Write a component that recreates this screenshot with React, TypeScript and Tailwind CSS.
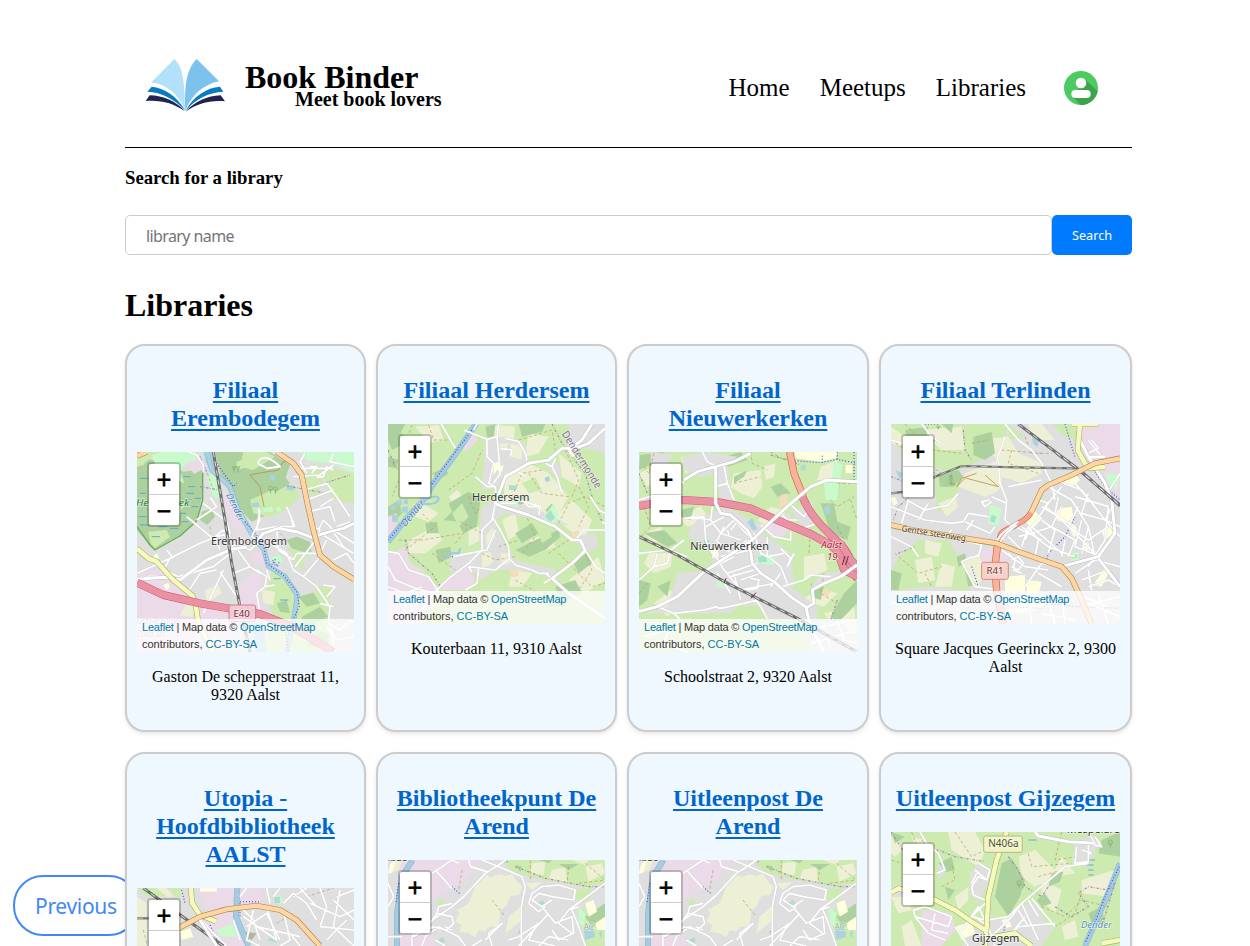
import React from "react";

type Kind = string;
type Layer = [Kind, string];
type Label = { x: number; y: number; t: string; s?: number; c?: string; r?: number; i?: boolean; w?: number };
type Badge = { x: number; y: number; w: number; h: number; fill: string; stroke: string };
type MapData = { layers: Layer[]; labels: Label[]; badges?: Badge[]; base: string };

const FILLS: Record<string, string> = {
  forest: "#add19e",
  grass: "#cdebb0",
  farm: "#eef0d5",
  pink: "#ebdbe8",
  town: "#dfdfdf",
  mint: "#c8facc",
  pitch: "#aae0cb",
  water: "#aad3df",
  school: "#ffffe0",
  sand: "#f5dcba",
  olive: "#b5b59a",
};

// Each road is a stack of strokes: [colour, width, dash pattern]
const ROADS: Record<string, [string, number, string?][]> = {
  minor: [["#d0d0d0", 6.5], ["#ffffff", 5]],
  major: [["#bdbdbd", 11.5], ["#ffffff", 9]],
  primary: [["#b0813a", 17], ["#fcd6a4", 13.5]],
  secondary: [["#a9ae5c", 17], ["#f7fabf", 13.5]],
  trunk: [["#cf6649", 22], ["#f9b29c", 18]],
  trunkThin: [["#cf6649", 17], ["#f9a58d", 13]],
  motorway: [["#d65c7c", 24], ["#e892a2", 20.5]],
  rail: [["#6e6e6e", 9], ["#eeeeee", 2.6, "16 12"]],
  railThin: [["#707070", 6.5], ["#e5e5e5", 2, "18 14"]],
  river: [["#8db9cf", 15], ["#aad3df", 11]],
  canal: [["#8fbcd0", 18], ["#a4cbe0", 14]],
  stream: [["#a0c8e0", 6]],
  cycle: [["#3b3bff", 3.2, "3 6"]],
  path: [["#b9975a", 2, "9 7"]],
  track: [["#b98b46", 2.4]],
  border: [["#a58aa8", 3.6, "7 5 2 5"]],
  wetland: [["#4a9fd8", 2.5]],
  tree: [["#82ae72", 2.4]],
  edge: [["#6dac5b", 4]],
};

const erembodegem: MapData = {
  base: "#dfdfdf",
  layers: [
    ["forest", "M51 375L90 358L190 395L250 388L246 470L232 540L180 590L150 600L105 630L90 618L51 570Z"],
    ["grass", "M51 336H130L90 352L70 375L51 380ZM85 575L140 570L150 590L105 624L92 610ZM150 470L190 500L170 540L140 500Z"],
    ["mint", "M95 345L130 336H225L232 370L200 372L180 392L192 430L170 420L150 395L110 385ZM260 410L290 395L300 470L282 475ZM540 336H702V400L640 372L560 360Z"],
    ["pink", "M196 368L246 356L264 380L222 402ZM313 460L345 465L350 520L385 600L350 575L310 500ZM390 640L430 630L440 680L400 670ZM51 700L110 690L205 740L235 790L330 815V936H51ZM355 740L405 690L430 715L415 760L430 820L365 805Z"],
    ["forest", "M285 336H450L510 375L485 445L440 525L395 545L350 500L300 400ZM245 515L275 505L285 530L262 555L240 540Z"],
    ["grass", "M370 336H440L465 350L400 390L360 380ZM390 480L455 450L520 430L540 470L500 510L450 530L400 520ZM605 380L702 400V490L640 480L620 440ZM455 690L500 700L525 750L530 840L480 936H430L455 820L440 750ZM555 410L580 370L620 390L590 470L565 460ZM530 770L630 745L630 936H500L520 850Z"],
    ["forest", "M430 410L480 390L510 430L470 455ZM500 600L530 590L570 605L575 640L530 650ZM535 770L580 758L600 790L560 800ZM545 830L600 800L625 830L590 850L560 880ZM590 870L625 880V930L560 915ZM470 790L500 780L510 820L480 815Z"],
    ["grass", "M500 620L550 635L570 650L530 665ZM585 740L625 740L628 790L590 770ZM350 365L380 355L390 380L350 390ZM510 650L545 660L560 690L530 680Z"],
    ["farm", "M255 750L295 735L305 760L260 790ZM425 750L465 755L460 795L430 790ZM280 810L320 790L325 820ZM200 790L215 770L230 800L215 830L180 826Z"],
    ["water", "M250 336H275L285 370L275 395L258 370ZM395 490L415 487L420 500L397 502ZM500 436L525 438L520 452L500 450ZM450 405H465V420H450ZM395 850L430 850L440 936H410Z"],
    ["mint", "M430 505L458 500V516H430ZM470 500L482 500V514H470ZM455 650L480 645L490 665L465 675Z"],
    ["school", "M100 648L112 640L118 655L105 660ZM130 735L145 728L150 742L138 750Z"],
    ["edge", "M51 560L90 615L105 630L150 604L180 588L230 543L248 480V400"],
    ["wetland", "M60 415H85M55 530H80M60 555H90M115 560H140M180 520H198M200 460H222M225 475H245M185 545H205M190 410H212M205 440H225M95 590H120M150 565H175M215 500H235M465 700H485M460 716H482M60 460H78M195 480H215M480 780H505"],
    ["tree", "M342 398V378M336 378L342 390L348 378M354 398V378M348 378L354 390L360 378M452 460V446M446 446A6 7 0 1 1 458 446A6 5 0 0 1 446 446M466 462V448M460 448A6 7 0 1 1 472 448A6 5 0 0 1 460 448"],
    ["river", "M262 336L275 390L330 440L355 510L400 590L432 630L445 678L495 710L532 765L522 835L500 936"],
    ["cycle", "M240 350L262 400M290 370L340 440L350 430M375 545L430 610L440 670L490 706L530 755L538 800L520 836M495 850L505 936"],
    ["track", "M390 405L425 398L475 390L490 365L520 360M390 405L420 440L432 500"],
    ["path", "M262 400L280 450M480 580L500 600M270 560L272 580"],
    ["border", "M620 460L490 436M580 440L690 405M240 440L300 450"],
    ["minor", "M205 336L230 345L250 375L250 395M413 370C425 340 455 355 480 380L440 385L413 370M250 490L320 545L330 580L290 590L240 610L150 655L95 680L51 700M200 530L290 605L300 630M140 630L160 655M230 540L290 500L270 470M300 650L350 610L390 630L420 605M300 695L330 740L370 800M205 755L240 700L290 690M150 655L130 690L175 710L280 680L350 625M250 820L310 690M51 720L90 708L150 712M300 630L285 590L310 570L330 590M415 505L420 540L395 590L420 605M420 510L410 570L470 560M470 560L475 630L520 660M510 520L520 560L475 560M500 500L525 560M450 610L500 640L520 690L550 710L590 740L610 770L630 800M520 660L530 640L590 640M525 680L580 610L600 570L570 555M550 710L600 650M595 570L610 540L640 570L702 610M600 580L700 640M630 560L670 620M620 600L600 640L660 690M650 560L690 545M640 660L680 640L702 670M555 450L620 430L650 470L690 530M560 480L640 450M565 515L630 500L645 545M600 500L640 475M520 410L600 405L640 375M520 385L620 385M555 340L540 365L560 400M575 400L590 380L570 380M640 390L620 380L610 410L590 412M640 340L630 365L702 380M620 770L645 740L610 735M630 800L625 850L660 870L690 840L702 850M630 850L645 936M620 860L650 900L702 890M600 790L640 800M410 690L440 710L435 740L465 735M435 740L410 760L420 820M350 625L390 680L420 700M340 700L390 680M440 690L450 720"],
    ["major", "M51 718L130 712L180 720L260 660L340 626L380 622M410 605L430 580L475 565L530 575L575 592L630 575L670 565L702 550"],
    ["secondary", "M51 626L85 655L110 665L160 720L218 768L228 800L235 850L280 936"],
    ["primary", "M470 336L520 370L545 405L560 480L580 570L600 645L640 680L702 718M51 348L80 336"],
    ["motorway", "M51 728L130 765L240 790L420 822L520 862L640 936"],
    ["rail", "M280 336L315 540L335 670L362 810L390 936"],
    ["cycle", "M458 660L470 675L480 665M460 668L468 655M455 672L475 678"],
  ],
  badges: [{ x: 327, y: 795, w: 80, h: 50, fill: "#f3c9d3", stroke: "#cf7d94" }],
  labels: [
    { x: 387, y: 616, t: "Erembodegem", s: 33, w: 228 },
    { x: 128, y: 499, t: "Hertebroek", s: 27, i: true, c: "#28803c", w: 160 },
    { x: 345, y: 510, t: "Dender", s: 28, i: true, c: "#4d80b3", r: 64 },
    { x: 365, y: 832, t: "E40", s: 29, c: "#6b1839" },
    { x: 112, y: 852, t: "ustriezone", s: 27, i: true, c: "#b19ba9" },
    { x: 91, y: 890, t: "Zuid III", s: 27, i: true, c: "#b19ba9" },
  ],
};

const herdersem: MapData = {
  base: "#cdebb0",
  layers: [
    ["farm", "M130 260L200 255L215 300L170 310ZM150 490L200 520L170 545L130 530ZM370 255L430 260L425 300L360 290ZM470 280L530 290L500 340L460 350ZM400 400L470 370L530 400L590 470L550 540L460 510L395 480ZM560 340L630 400L620 440L570 410ZM600 480L660 540L640 590L590 570L550 530ZM110 600L190 560L210 600L160 640L110 640ZM230 470L255 450L280 480L250 500ZM470 600L530 580L550 620L500 640ZM390 540L430 520L440 580L410 600ZM420 690L480 700L450 740L410 740ZM590 720L680 650L699 720L640 760ZM290 560L320 560L325 600L290 620Z"],
    ["forest", "M48 252H100L85 280L120 300L60 330L48 300ZM48 350L80 360L75 385L48 380ZM440 252H520L510 275L450 290ZM230 490L290 455L325 480L315 560L275 580L255 545L215 540L240 515ZM180 400L215 385L230 400L200 420ZM90 440H125L115 465L90 460ZM430 580L480 550L500 580L450 610ZM490 600L560 570L565 590L520 630L470 650L430 630ZM520 510L540 490L550 510L530 525ZM190 630L235 620L240 650L200 670ZM160 550L195 545L200 580L165 580ZM600 660L650 640L660 670L620 700ZM420 480L450 470L460 490L430 500ZM550 740L610 720L630 760L570 790ZM520 770L560 765L565 800L525 800ZM48 500L80 480L90 520L48 560ZM340 260L370 252L365 300L345 290Z"],
    ["grass", "M240 520L270 490L290 530L260 560ZM500 580L530 560L540 590L510 610ZM450 430L490 410L510 450L470 460Z"],
    ["town", "M340 300L400 290L460 310L470 380L400 400L380 440L330 450ZM590 252H699V340L660 330L620 320L590 330ZM330 500L370 480L480 500L600 560L560 550L400 520L370 540L390 600L430 660L550 690L560 720L500 700L430 690L370 690L330 720L280 670L290 640L330 630L320 590ZM520 370L560 370L570 420L540 400ZM240 640L290 640L310 680L270 700L230 690ZM600 590L670 580L680 620L640 640Z"],
    ["farm", "M330 640L355 635L365 665L330 690ZM385 310L410 310L400 335L380 330ZM415 310L450 320L450 360L415 350ZM385 640L410 640L415 670L390 675ZM340 590L360 560L370 590L345 620Z"],
    ["pink", "M48 640L100 620L115 670L150 690L175 720L200 755L150 852H48ZM230 710L290 675L310 720L290 750L200 750ZM270 310L300 280L320 300L280 335ZM48 530L75 520L70 570L48 590Z"],
    ["sand", "M412 690L438 686L440 708L416 712ZM596 580L618 570L624 590L605 600Z"],
    ["mint", "M410 480L440 480L436 500L412 496ZM515 530L545 490L560 520L550 550L520 545Z"],
    ["pitch", "M410 435L435 437L433 450L412 450ZM445 470L460 472L462 485L446 485ZM518 530L535 510L550 535L535 545Z"],
    ["water", "M55 500L70 495V510H55ZM75 480L90 478V495H75ZM95 478H108V492H95ZM90 500H108V518H90ZM60 525H78V545H60ZM517 415L530 408L535 422L522 426Z"],
    ["canal", "M312 252L245 350L185 430L150 485L100 540L48 605"],
    ["cycle", "M310 256L240 350L178 435M130 500L50 600M240 650L262 648"],
    ["stream", "M150 485Q195 460 200 475Q200 495 150 492M215 655L235 640L260 640L265 625"],
    ["path", "M170 255L185 300L240 300L250 330M120 255L110 285M290 470L310 520L325 500M80 600L150 600L270 580M100 630L190 560L150 520M265 545L330 580M230 450L300 400L330 330M440 300L540 270L550 330M470 400L510 460L590 470M560 550L590 490L640 470L699 500M620 440L650 500L620 560M460 520L490 590L450 640M530 640L590 600M560 640L600 680L660 740L699 730M640 640L660 690L620 750M420 470L450 400L510 390M250 610L290 560M180 640L250 690M380 620L440 600M330 640L370 660L430 650M50 360L90 400L60 470M580 330L620 420L600 470M430 720L500 760L510 790"],
    ["border", "M48 330L70 380M540 252L570 310L600 350L640 400L660 470L690 545L699 550M100 600L110 640L180 700L205 740"],
    ["minor", "M208 252L250 325M275 270L345 298L345 350L365 370L350 430L370 440L375 500M345 298L375 290L380 252M375 290L385 400L365 430M400 295L440 305L460 340L465 360M385 325L420 330L415 350M310 410L345 440L370 440M305 270L315 252M370 490L360 540L330 570L330 630L290 670L230 715L190 755L150 810L120 852M360 530L385 570L410 620L412 655L430 675L480 690L500 700L530 700M370 570L345 630L290 640M290 640L245 650M412 655L370 690L290 680M320 685L315 730L280 750M375 490L430 490L440 480L505 500L500 525M450 480L470 500L500 500M520 370L540 380L555 410L570 460M540 380L550 355M655 470L680 510L699 520M610 600L635 570L699 570M640 630L670 680L699 700M520 700L540 715L515 730M48 635L80 640L110 690L170 710L200 755M48 680L70 720L130 745L190 760M48 740L100 760L150 740M190 760L240 800L230 852M430 390L460 410M700 552L690 545M290 680L300 695"],
    ["major", "M699 265L650 310L610 325L570 325L530 360L470 370L400 410L385 450L370 490L390 500L470 525L550 560L600 600L625 600L640 632L600 670L540 715L590 760L699 835M590 330L630 300L660 252M590 330L605 350"],
    ["school", "M365 370L380 365L382 380L395 375L390 395L375 390L365 405Z"],
  ],
  labels: [
    { x: 386, y: 482, t: "Herdersem", s: 33, w: 172 },
    { x: 124, y: 528, t: "Dender", s: 29, i: true, c: "#4d80b3", r: -51 },
    { x: 627, y: 368, t: "Dendermonde", s: 31, c: "#846b8c", r: 58, w: 195 },
  ],
};

const nieuwerkerken: MapData = {
  base: "#cdebb0",
  layers: [
    ["farm", "M45 400L90 380L120 410L70 440ZM170 350L235 340L240 380L185 400ZM330 400L410 390L415 440L390 475L350 460L320 440ZM180 520L230 500L260 540L190 560L140 510ZM75 640L145 640L140 680L90 700L60 670ZM540 650L600 640L610 690L540 720ZM400 540L440 500L480 510L490 560L430 560ZM530 780L590 745L640 760L600 800ZM280 750L320 755L325 800L280 810ZM90 790L140 750L170 790L130 830ZM420 380L455 370L450 410L425 420ZM590 380L640 360L635 420L580 420ZM600 820L690 800L699 880L640 870ZM60 580L110 560L130 590L90 610Z"],
    ["forest", "M48 345L120 336L90 370L45 390ZM170 510L210 500L200 540L170 530ZM60 580L120 570L160 610L130 620ZM590 490L630 490L640 545L680 560L670 600L620 580ZM620 440L650 420L640 480ZM100 740L140 720L130 770ZM225 760L265 750L270 790L240 800ZM440 440L470 430L500 460L460 470ZM660 760L699 720V790L640 850L620 830ZM300 350L350 336L370 360L310 380ZM560 730L600 740L590 780L560 770ZM430 740L480 750L500 790L440 770ZM45 720L80 730L70 780L45 800ZM330 410L370 390L360 410L330 430Z"],
    ["town", "M175 350L240 336L340 350L310 375L325 480L290 480L280 400L230 410L180 390ZM80 336L150 345L120 380L80 370ZM60 470L90 480L80 510L50 500ZM230 530L310 500L380 540L430 560L420 590L460 610L500 640L510 740L460 740L430 790L360 800L310 720L260 690L270 640L190 590L200 560ZM160 700L250 690L330 730L350 790L320 820H60L130 800ZM420 720L500 740L580 800L580 837H430L390 780ZM500 510L560 500L580 550L540 570ZM600 700L660 690L640 720L550 750ZM540 840L640 840L699 890V936H560Z"],
    ["pink", "M435 540L500 520L490 580L450 600L430 580Z"],
    ["water", "M370 545L385 535L400 570L385 570ZM600 505L615 490L620 520L605 525ZM240 600H255V615H240Z"],
    ["mint", "M628 365L655 372L640 480L605 480L600 430L625 420ZM280 725L305 720L300 745L275 740ZM395 650L420 640L455 645L450 675L400 670Z"],
    ["pitch", "M400 650L425 645L430 665L405 668ZM530 378L545 372V390L532 392Z"],
    ["school", "M512 336H640L635 355L590 365L515 355ZM665 375H685V400H665ZM262 630L280 625L285 650L265 655Z"],
    ["sand", "M470 465L490 460V495L465 500ZM600 745L620 750L610 770L598 765Z"],
    ["path", "M90 340L75 400M75 400L60 380M380 336L385 370L430 390M330 430L410 410M60 500L80 560L50 590M560 550L555 640M680 480L699 540M640 430L699 430M600 700L590 760L640 790M620 480L640 500L690 470M45 760L70 730M200 850L250 900M440 336L480 360L510 345M640 560L660 600"],
    ["border", "M45 400L70 460M440 345L490 360L530 375M620 840L640 780"],
    ["cycle", "M512 362L590 368L640 358L699 370M595 368V345M640 358V336M690 336V430"],
    ["minor", "M235 336L250 365L275 378M300 378L310 430L330 480M275 440L310 430M200 530L260 540L265 500M180 535L240 530L245 600L270 650M245 560L300 530M260 540L290 580L350 600M290 580L330 540M315 585L310 570M345 540L320 570M275 600L320 640L370 600M300 660L350 620M280 600L300 560M330 540L385 600M270 640L300 690L350 750L450 730M290 650L380 630M310 700L400 670M320 710L390 690M350 720L410 700M380 715L405 720L400 745L370 750M300 720L250 690L330 650M330 700L350 780M280 700L320 760M245 690L300 660M390 580L410 640L440 655L470 680L490 730M430 590L430 650L480 640M470 625L500 655L490 680L510 640M410 555L450 590L500 600L500 575M430 540L520 540M440 740L470 700M400 780L360 790L290 805L270 800M390 770L410 800L430 836M475 525L500 550L550 580M520 570L580 550L550 500M495 490L540 530L560 500M560 490L580 550M45 640L135 630L190 650M45 720L90 680L130 670L140 630L180 600M90 680L100 640M100 800L150 820L180 850L130 880L120 910L190 936M130 870L60 890M150 820L240 810L280 800M45 480L75 470L130 480M475 740L540 720L560 705L620 710M130 390L180 430M560 870L640 850L699 840M600 850L620 920M640 840L660 900L699 910M560 910L699 870"],
    ["motorway", "M45 498L120 485L180 480L280 486L380 505L470 545L560 582L620 615L699 690M535 470C570 550 620 580 650 615C690 650 675 690 700 715"],
    ["trunk", "M497 336L510 400L538 470"],
    ["motorway", "M650 610L680 660L699 680M648 655L660 690L699 710"],
    ["major", "M380 340L330 365L275 380L220 395L180 420M275 380L275 490L290 520L320 525L370 570L385 600M699 425L610 420L560 440L495 495L425 560L385 600L340 630L240 695L160 770L100 800L45 815M375 600L385 670L410 700L450 725L500 770L545 800L560 860L600 936M545 805L570 790L565 750L600 730L650 710L699 675"],
    ["rail", "M45 590L160 645L320 735L520 835L699 936"],
    ["track", "M300 725L306 715"],
    ["railMark", "M655 675L663 648M665 675L673 648M380 775L396 758M300 730L306 715"],
  ],
  labels: [
    { x: 317, y: 629, t: "Nieuwerkerken", s: 33, w: 236 },
    { x: 623, y: 624, t: "Aalst", s: 29, i: true, c: "#a8202e" },
    { x: 625, y: 659, t: "19", s: 29, i: true, c: "#a8202e" },
  ],
};

ROADS.railMark = [["#5a3a40", 3]];

const terlinden: MapData = {
  base: "#dfdfdf",
  layers: [
    ["grass", "M48 252H400L390 290L370 330L300 370L240 400L170 380L48 310ZM180 400L250 390L270 420L220 500L185 520ZM400 252L450 290L400 300ZM70 650L130 600L220 600L250 650L310 700L280 752L160 740L60 752L48 700ZM530 252H600L605 300L570 290Z"],
    ["farm", "M130 270L260 260L270 330L200 330ZM300 300L400 290L430 340L500 370L500 400L440 430L380 410L380 450L330 470L250 440L270 400L370 360ZM48 260L90 290L80 320L48 310ZM460 252H500L540 300L470 300ZM190 490L240 470L250 500L215 530ZM150 600L200 610L190 650L150 640ZM120 660L170 650L180 720L130 730ZM200 670L240 680L230 740L180 740Z"],
    ["forest", "M295 290L350 275L360 340L330 360L295 345ZM190 400L250 390L265 410L235 440L195 440ZM90 270L160 260L150 300L100 310ZM48 690L80 700L70 750H48ZM245 650L270 640L275 670L250 680ZM150 280L180 300L170 330L150 320ZM200 252H235L230 280ZM270 690L300 680L310 730L280 740Z"],
    ["town", "M340 480L380 440L500 440L540 500L500 620L380 600ZM75 480L160 430L200 560L90 550Z"],
    ["pink", "M600 252H735V470L690 430L680 370L630 320ZM310 640L390 600L400 680L350 720L320 690Z"],
    ["farm", "M260 670L310 640L330 690L310 740L290 720Z"],
    ["mint", "M345 495L380 505L370 560L340 550ZM585 640L610 635V660L590 662ZM690 400L735 405L725 450L700 430Z"],
    ["pitch", "M350 525L365 530L358 548L345 542ZM590 645H605V655H590Z"],
    ["water", "M470 290L492 300L488 322L475 312ZM62 390L82 400L75 420Z"],
    ["school", "M450 540L475 510L502 535L470 570ZM540 515L560 505L590 500L595 535L570 550L545 540ZM565 410L600 400L615 420L590 440L570 432ZM390 710L450 705V752L390 765ZM455 720L500 725L490 765H455ZM580 560L600 555L612 585L595 590ZM620 615L640 605L645 630L625 636ZM680 575L705 560L715 580L690 600ZM665 720L690 685L705 690L680 740L655 735ZM48 475L60 470L68 490L55 498ZM410 765L500 780L520 800L400 825Z"],
    ["tree", "M228 436V405M222 412L228 404L234 412M220 422L228 412L236 422M218 432L228 422L238 432M190 268V256M184 258L190 266L196 258"],
    ["path", "M48 300L200 400M90 252L170 330L260 340M450 290L470 340L530 340M110 350L180 400M60 640L130 700L200 680M380 330L500 340M410 330L400 370L490 400M150 700L170 740M290 310L340 300"],
    ["track", "M305 400L260 415L245 440L275 410M275 415L370 440L330 405M225 430L240 435"],
    ["border", "M265 270L270 330L290 360M140 440L70 500L55 540M70 640L120 620M48 410L100 430"],
    ["cycle", "M570 252L590 320L600 350M650 380L690 440L735 480M600 530L570 590L520 640L515 660M150 252H190M290 680L310 740M400 800L500 805L520 790L600 800L735 805"],
    ["minor", "M390 252L430 300L470 330L500 370L530 430L540 480M370 360L375 430L395 480L390 540L410 560M365 360L380 320L390 290M48 500L150 540L230 550L265 545L280 520L340 530M100 480L80 550M160 490L130 540M95 480L150 510L220 495L250 460M270 545L345 580L360 560M295 540L275 570M48 590L110 620M110 620L130 650M350 470L395 490M520 440L590 480L640 560L660 650M540 420L620 450L690 540L735 590M560 440L510 500L560 540L640 620L700 690M600 430L660 500M490 480L520 490L470 560L450 600M470 560L560 640M440 560L520 620L600 650M420 560L500 600M430 590L470 580L530 560M400 590L450 640M440 620L460 560L490 600L480 650M500 540L540 570L520 640M560 500L530 560L600 600L580 650M610 500L580 560L640 600L700 560M600 470L700 500M640 460L620 520L690 540M550 470L540 520M500 500L600 560M620 540L600 620L680 650M570 600L560 650M640 560L620 640M700 500L690 600L640 680M720 480L690 540L735 560M560 680L500 670L450 740M490 700L560 740M400 640L420 660L415 690L440 700M410 660L430 650L445 670L430 690L410 680M380 630L450 680L520 690M600 700L660 660L735 680M620 720L700 690M640 740L700 720L735 740M640 690L650 752M600 760L700 800M620 800L735 770M520 780L540 852M560 760L570 852M500 820L600 840M460 780L470 852M640 790L735 830M670 760L700 852M290 650L260 665L300 740L380 750M310 645L290 655M230 570L215 590L320 615L310 650M350 485L330 500L320 485L345 480M140 252L170 290L200 310M48 300L80 310M400 440L500 420M640 300L680 350M640 340L670 325L650 300M690 470L735 400M140 830L220 780L300 852M48 790L150 770L300 800"],
    ["major", "M615 300L640 350L690 430L710 480L720 580L670 650L560 680M670 655L735 740M640 352L690 350"],
    ["secondary", "M615 252L608 330L630 370L645 385L690 380M590 252H670"],
    ["railThin", "M48 460L90 455L180 410L260 378L430 382L600 385"],
    ["rail", "M430 252L520 320L600 380L735 495M545 340L620 395L735 498"],
    ["trunkThin", "M375 605C370 570 400 570 430 550C450 540 455 535 468 518"],
    ["trunk", "M368 610L360 680L365 752L385 852"],
    ["minor", "M362 615C370 580 400 570 420 550M372 620C380 585 400 575 425 555M430 545L405 560"],
    ["primary", "M48 555L120 572L270 595L365 610L430 635L515 665L560 680L590 715L620 780L650 852M468 518L500 450L520 435L590 405L660 370L735 355"],
  ],
  badges: [{ x: 320, y: 667, w: 80, h: 51, fill: "#f6d3ca", stroke: "#d88977" }],
  labels: [
    { x: 176, y: 589, t: "Gentse steenweg", s: 26, c: "#4a3a1b", r: 9, w: 195 },
    { x: 360, y: 702, t: "R41", s: 29, c: "#702e26" },
  ],
};

const utopia: MapData = {
  base: "#dfdfdf",
  layers: [
    ["farm", "M411 470L440 490V618H411ZM440 444H500L520 470L480 470Z"],
    ["grass", "M411 444H470L500 470L440 470ZM500 444H550L540 480Z"],
    ["pink", "M590 444H705V530L650 560L600 470ZM720 444H790L780 490L725 490ZM620 550L700 520L720 590L750 618H640Z"],
    ["mint", "M820 470L840 465L850 490L825 492ZM650 570L700 550L710 590L660 590Z"],
    ["pitch", "M822 470H840V490H824ZM800 600L820 590L830 608Z"],
    ["school", "M540 575L570 565L580 590L545 600ZM600 444H650V455H600Z"],
    ["olive", "M735 575L770 580L755 600L738 590Z"],
    ["canal", "M712 444L708 530L745 618"],
    ["cycle", "M545 450L555 490M630 555L660 618M720 485H780M720 490V530"],
    ["path", "M920 470L1000 444M830 550L880 520M430 570L440 610"],
    ["minor", "M605 540L640 580L680 618M720 500L760 540L780 600M730 530L830 600M740 560L800 520L840 600M760 510L740 600L780 618M800 500L830 600M850 510L870 600L840 618M770 560L900 590M880 470L920 444M850 490L880 460L920 490L950 540M930 490L1020 530L1062 510M960 444L980 500L960 560M1000 480L1062 540M1020 450L1000 560L1062 618M900 444L950 500M960 560L1062 570M980 600L1040 540M870 580L900 618M720 470L740 444M700 540L720 600M840 444L820 470M800 444L810 490M1062 450L1010 470"],
    ["secondary", "M572 444L577 490L600 525L650 545"],
    ["rail", "M430 444L520 510L670 618"],
    ["railThin", "M411 535H500"],
    ["primary", "M535 565L600 530L680 508L770 497L840 510L890 540L960 618"],
    ["major", "M600 540L650 618"],
  ],
  labels: [],
};

const arend: MapData = {
  base: "#dfdfdf",
  layers: [
    ["pink", "M80 360H330L280 420L200 470L180 480L160 560L150 618H80ZM150 580L180 570L190 618H150Z"],
    ["farm", "M48 400L60 360H90L80 390ZM310 440L345 405L355 412L380 403L400 408L420 402L435 425L452 440L440 465L415 468L400 500L385 510L380 560L350 560L340 575L320 570L310 592L290 580L262 575L268 555L250 545L262 520L255 510L290 490ZM460 430L510 425L480 450ZM410 530L445 500L450 540L400 580Z"],
    ["grass", "M395 370L410 360H699V430L640 440L520 420L430 400ZM600 450L660 440L650 480L620 490ZM195 480L210 475L218 495L200 500ZM620 500L660 520L699 560V618H640Z"],
    ["farm", "M480 370L520 365L515 405L475 400ZM540 390L580 380L585 430L530 415ZM640 380L690 370L699 400L650 425ZM600 360H650L640 375Z"],
    ["forest", "M560 372H620L590 390ZM500 360H540L530 370ZM640 530L699 490V540L660 560ZM430 375L450 380L445 395Z"],
    ["school", "M48 400L55 370L70 365L60 400ZM640 490L665 480L675 515L650 530ZM670 550L699 530V570L675 570Z"],
    ["mint", "M620 500L640 520L635 560L620 550ZM500 490L515 480L520 500Z"],
    ["pitch", "M498 488L512 480L520 494L508 500ZM200 598L215 592L218 606L202 608Z"],
    ["water", "M635 570L660 550L670 590L640 600ZM680 580L690 570L688 595Z"],
    ["canal", "M122 360L90 410L75 520V618"],
    ["cycle", "M80 430L72 490M240 440L265 462M395 365H410"],
    ["path", "M270 390L260 450M475 360V420M590 380L585 430M640 370L699 420M620 430L699 420M360 480L400 530M440 580L450 560"],
    ["border", "M430 380L520 415L650 440L699 440"],
    ["minor", "M180 400L240 360L260 370M48 430L65 470L48 500M120 618V580L180 540L240 500L280 465L340 400L380 375L400 360M290 360L295 380L345 395M330 360L380 380L450 410L460 440L448 500V618M190 390L240 445M175 550L195 520L240 530L245 550L225 570L180 560M195 520L200 500L240 490M150 618L160 590L200 560L260 590L280 618M190 600L220 618M240 570L220 560M470 490L480 460L510 440L560 435L610 450L605 480L540 470L500 460L480 480L510 500L540 480M470 490L500 515L520 500M590 510L699 430M590 510L560 550L600 580M590 510L620 500M510 500L550 550L600 530L605 580L560 600L540 570M600 510L620 560L640 618M530 520L440 618M490 560L470 600L550 618M410 600L440 590L500 550M340 600L390 550L350 580L360 618M300 618L330 600M150 580L120 580M48 590L90 590M500 618L530 590L590 600"],
    ["major", "M120 590L150 575L185 560"],
  ],
  labels: [
    { x: 70, y: 364, t: "Hade", s: 29 },
    { x: 650, y: 570, t: "AC", s: 25, c: "#93b58d" },
  ],
};

const gijzegem: MapData = {
  base: "#cdebb0",
  layers: [
    ["farm", "M48 290L90 320L60 350L48 340ZM220 276L300 276L330 330L310 380L230 330ZM110 290L150 300L130 340ZM430 350L480 330L540 390L560 350L600 400L540 410L480 440L440 410ZM500 420L560 450L540 520L500 480ZM620 420L720 390L700 470L620 460ZM48 470L100 470L110 510L70 520ZM560 560L600 540L610 590L570 600ZM80 560L110 540L140 618H90ZM240 470L280 440L280 480L250 510Z"],
    ["forest", "M380 370L410 355L450 420L435 470L400 530L360 470ZM48 276L90 290L60 310ZM530 400L565 395L555 425L520 440ZM640 520L680 500L690 550L650 550ZM190 370L230 350L240 390L200 400ZM485 480L510 460L530 490L500 500ZM680 300L735 276V350L670 340ZM210 440L240 450L220 480Z"],
    ["town", "M285 400L310 370L350 400L335 440L310 490L285 460ZM420 510L480 480L520 560L540 560L500 618H260L330 520L370 540L400 530ZM580 300L660 290L680 310L660 330L640 380L590 370L600 320ZM48 440L110 420L130 470L48 470ZM190 370L215 390L190 420Z"],
    ["pink", "M140 510L230 520L240 570L200 618H140Z"],
    ["school", "M240 560L290 545L300 580L260 600ZM380 540L400 535L410 560L390 565Z"],
    ["canal", "M735 370L700 460L660 550L630 618"],
    ["cycle", "M733 380L700 445L665 535L630 610M385 580L390 560"],
    ["wetland", "M640 360H660M635 375H656M640 390H655M640 405H656M460 300H485"],
    ["tree", "M432 445V430M426 430A6 8 0 1 1 438 430A6 6 0 0 1 426 430M444 445V432M706 322V308M700 308A6 8 0 1 1 712 308A6 6 0 0 1 700 308"],
    ["path", "M110 276L130 330L80 370L48 360M240 276L290 350L330 330M460 340L470 380L590 370M490 410L560 390M560 276L540 360L600 350M200 440L240 420L230 370M500 500L570 530L620 480L699 500M620 460L600 520L540 560M80 440L130 500M140 300L180 350"],
    ["border", "M48 276L90 340L140 340L190 330L240 350L330 365M400 350L430 390L450 440L500 470L520 440M540 500L590 530L640 500L610 460L640 440L699 450L720 430L680 560"],
    ["minor", "M135 276L155 310L190 340L210 390L185 400M310 370L345 390L335 420L310 410L290 440L295 465L330 480M300 390L335 420M305 400L290 430M260 570L310 500L330 540L290 530L330 490M340 540L400 530L440 490L570 380L605 375L640 370M440 490L490 600M460 480L490 530M470 475L540 560M400 590L430 560L540 550M430 510L460 560M410 580L450 530M605 320L600 370L640 365L640 310L680 320L660 290M620 330L650 340M120 510L150 500L230 530L220 560L120 530L115 510L150 500M180 520L170 570L220 580M120 530L160 580L210 600M240 560L280 618M300 530L340 560L360 618M640 276L660 310M350 590L410 530L440 490"],
    ["major", "M480 276L490 288L580 305L660 310"],
    ["secondary", "M48 458L70 445L180 480L240 510L290 545L330 570M395 276L365 360L340 470L335 560L330 618M360 590L420 580L470 618M680 610L735 600"],
  ],
  badges: [{ x: 326, y: 288, w: 116, h: 49, fill: "#f0f3c6", stroke: "#b6ba80" }],
  labels: [
    { x: 385, y: 322, t: "N406a", s: 30, c: "#4c5120" },
    { x: 362, y: 605, t: "Gijzegem", s: 33, w: 142 },
    { x: 664, y: 565, t: "Dender", s: 28, i: true, c: "#5b93c0", w: 92 },
    { x: 655, y: 278, t: "Mespelare", s: 31, w: 160 },
  ],
};

function MapCanvas({ data, view }: { data: MapData; view: string }) {
  return (
    <svg viewBox={view} preserveAspectRatio="none" className="block h-full w-full" fontFamily='"Noto Sans", sans-serif'>
      <rect x="0" y="0" width="1200" height="1200" fill={data.base} />
      {data.layers.map(([kind, d], i) =>
        kind in FILLS ? (
          <path key={i} d={d} fill={FILLS[kind]} />
        ) : (
          <g key={i} fill="none" strokeLinejoin="round">
            {ROADS[kind].map(([stroke, width, dash], j) => (
              <path key={j} d={d} stroke={stroke} strokeWidth={width} strokeDasharray={dash} />
            ))}
          </g>
        ),
      )}
      {data.badges?.map((b, i) => (
        <rect key={i} x={b.x} y={b.y} width={b.w} height={b.h} rx="6" fill={b.fill} stroke={b.stroke} strokeWidth="3" />
      ))}
      {data.labels.map((l) => (
        <text
          key={l.t + l.x}
          x={l.x}
          y={l.y}
          fontSize={l.s ?? 30}
          fill={l.c ?? "#333"}
          fontStyle={l.i ? "italic" : "normal"}
          textAnchor="middle"
          textLength={l.w}
          lengthAdjust="spacingAndGlyphs"
          stroke="rgba(255,255,255,0.6)"
          strokeWidth="4"
          paintOrder="stroke"
          transform={l.r ? `rotate(${l.r} ${l.x} ${l.y - 8})` : undefined}
        >
          {l.t}
        </text>
      ))}
    </svg>
  );
}

type Library = { name: string; address: string; map: MapData; view: string };

const libraries: Library[] = [
  { name: "Filiaal Erembodegem", address: "Gaston De schepperstraat 11, 9320 Aalst", map: erembodegem, view: "51 336 651 600" },
  { name: "Filiaal Herdersem", address: "Kouterbaan 11, 9310 Aalst", map: herdersem, view: "48 252 651 600" },
  { name: "Filiaal Nieuwerkerken", address: "Schoolstraat 2, 9320 Aalst", map: nieuwerkerken, view: "45 336 654 600" },
  { name: "Filiaal Terlinden", address: "Square Jacques Geerinckx 2, 9300 Aalst", map: terlinden, view: "48 252 687 600" },
  { name: "Utopia - Hoofdbibliotheek AALST", address: "Esplanadeplein 1, 9300 Aalst", map: utopia, view: "411 444 651 600" },
  { name: "Bibliotheekpunt De Arend", address: "De Arend, 9300 Aalst", map: arend, view: "48 360 651 600" },
  { name: "Uitleenpost De Arend", address: "De Arend, 9300 Aalst", map: arend, view: "48 360 654 600" },
  { name: "Uitleenpost Gijzegem", address: "Gijzegem, 9308 Aalst", map: gijzegem, view: "48 276 687 600" },
];

function ZoomControl() {
  return (
    <div className="absolute left-[10px] top-[10px] w-[34px] rounded-[4px] border-2 border-black/20 bg-clip-padding font-['DejaVu_Sans',sans-serif] text-[19px] text-black">
      <button className="block h-[31px] w-[30px] rounded-t-[2px] border-b border-[#ccc] bg-white text-center leading-[28px] [-webkit-text-stroke:0.9px_black]">+</button>
      <button className="block h-[30px] w-[30px] rounded-b-[2px] bg-white text-center leading-[28px] [-webkit-text-stroke:0.9px_black]">−</button>
    </div>
  );
}

function LibraryCard({ lib }: { lib: Library }) {
  return (
    <article className="rounded-[20px] border-2 border-[#ccc] bg-[#f0f8ff] p-[10px] text-center shadow-[0_2px_4px_rgba(0,0,0,0.1)]">
      <h2 className="my-5 text-[24px] font-bold leading-7 text-[#0066cc] underline decoration-2 underline-offset-[3px]">{lib.name}</h2>
      <div className="relative h-[200px] overflow-hidden">
        <MapCanvas data={lib.map} view={lib.view} />
        <ZoomControl />
        <div className="absolute bottom-0 right-0 w-full bg-white/75 px-[5px] text-left font-['Liberation_Sans',Arial,sans-serif] text-[11px] leading-[16.5px] text-[#333]">
          <span className="tracking-[-0.19px]">
            <span className="text-[#0078a8]">Leaflet</span> | Map data © <span className="text-[#0078a8]">OpenStreetMap</span>
          </span>
          <br />
          contributors, <span className="text-[#0078a8]">CC-BY-SA</span>
        </div>
      </div>
      <p className="my-4 text-[16px] leading-[18px] text-black">{lib.address}</p>
    </article>
  );
}

function Logo() {
  return (
    <svg viewBox="75 48 243 168" className="h-[56px] w-[81px]">
      <path fill="#b3e1fa" d="M163 54C186 78 194 105 195 208C178 162 140 130 94 124Z" />
      <path fill="#7dc2ec" d="M230 54L297 121C255 129 213 160 196 210C193 130 200 85 230 54Z" />
      <path fill="#087bc4" d="M95 137C132 140 172 166 195 208C165 176 125 153 82 152Z" />
      <path fill="#087bc4" d="M300 137L310 152C265 154 225 175 197 209C220 165 260 140 300 137Z" />
      <path fill="#202450" d="M89 163C130 164 168 180 195 211C160 187 125 177 77 180Z" />
      <path fill="#202450" d="M302 163L315 181C270 177 230 188 197 212C225 180 262 165 302 163Z" />
    </svg>
  );
}

function UserIcon() {
  return (
    <svg viewBox="1092 63 102 102" className="h-[34px] w-[34px]">
      <circle cx="1143" cy="114" r="51" fill="#4bcb60" />
      <path fill="#3ea34d" d="M1155 88L1193 124A51 51 0 0 1 1142 165L1118 140L1140 112Z" />
      <circle cx="1143" cy="99" r="16" fill="#fff" />
      <rect x="1114" y="120" width="58" height="24" rx="12" fill="#fff" />
    </svg>
  );
}

export default function App() {
  return (
    <div className="relative h-[946px] overflow-hidden bg-white font-['Liberation_Serif','Times_New_Roman',serif] text-black">
      <button className="absolute left-[13px] top-[875px] h-[61px] w-[126px] rounded-[30px] border-2 border-[#4287f5] bg-white px-5 pt-[2px] text-left font-['Noto_Sans',sans-serif] text-[21px] tracking-[-0.3px] text-[#4287f5]">
        Previous
      </button>
      <div className="relative ml-[125px] w-[1007px]">
        <header className="flex h-[148px] justify-between border-b border-black pl-5 pr-[34px]">
          <div className="flex pt-[57px]">
            <Logo />
            <div className="ml-[19px] pt-[9px] font-bold">
              <h1 className="text-[32px] leading-[23px]">Book Binder</h1>
              <p className="ml-[50px] text-[20px] leading-5">Meet book lovers</p>
            </div>
          </div>
          <nav className="flex items-center gap-[30px] pt-[28px] text-[25px] leading-7">
            <a>Home</a>
            <a>Meetups</a>
            <a>Libraries</a>
            <span className="ml-2"><UserIcon /></span>
          </nav>
        </header>
        <h3 className="mt-[19px] text-[18.72px] font-bold leading-[22px]">Search for a library</h3>
        <div className="mt-[26px] flex h-10 font-['Noto_Sans',sans-serif]">
          <input
            className="min-w-0 flex-1 rounded-[5px] border border-[#ccc] bg-white px-5 pt-[2px] text-[16px] tracking-[-0.6px] placeholder:text-[#757575]"
            placeholder="library name"
          />
          <button className="w-20 rounded-[5px] bg-[#007bff] pt-[2px] text-[12.7px] text-white">Search</button>
        </div>
        <h1 className="mt-[32px] text-[32px] font-bold leading-9">Libraries</h1>
        <main className="mt-[21px] grid grid-cols-[241px_241px_242px_253px] gap-x-[10px] gap-y-5">
          {libraries.map((lib) => (
            <LibraryCard key={lib.name} lib={lib} />
          ))}
        </main>
      </div>
    </div>
  );
}
